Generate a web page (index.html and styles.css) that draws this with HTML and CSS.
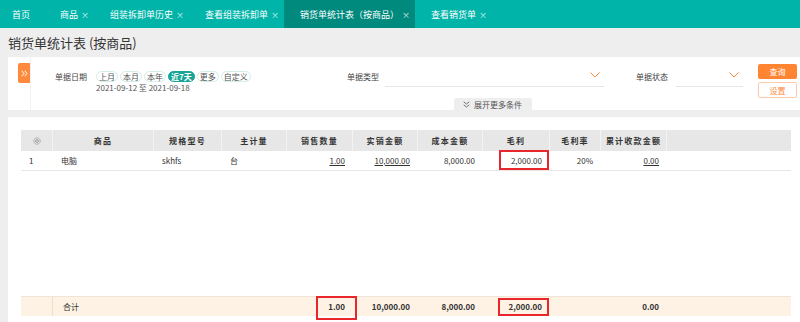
FILE: index.html
```html
<!DOCTYPE html>
<html lang="zh-CN">
  <head>
    <meta charset="UTF-8">
    <title>销货单统计表 (按商品)</title>
    <link rel="stylesheet" href="styles.css">
  </head>
  <body>
    <div class="tabs">
      <div class="tab home">首页</div>
      <div class="tab">商品<span class="close">×</span></div>
      <div class="tab">组装拆卸单历史<span class="close">×</span></div>
      <div class="tab">查看组装拆卸单<span class="close">×</span></div>
      <div class="tab active">销货单统计表（按商品）<span class="close">×</span></div>
      <div class="tab">查看销货单<span class="close">×</span></div>
    </div>

    <h1 class="page-title">销货单统计表 (按商品)</h1>

    <div class="filter">
      <div class="filter-side">
        <div class="toggle-btn">
          <svg width="7" height="7" viewBox="0 0 7 7"><path d="M0.8 0.8 L3 3.5 L0.8 6.2 M3.8 0.8 L6 3.5 L3.8 6.2" fill="none" stroke="#fff" stroke-width="1"/></svg>
        </div>
      </div>

      <div class="filter-main">
        <div class="fields">
          <div class="field date-field">
            <span class="label">单据日期</span>
            <div class="date-box">
              <div class="pills">
                <span class="pill">上月</span>
                <span class="pill">本月</span>
                <span class="pill">本年</span>
                <span class="pill on">近7天</span>
                <span class="pill">更多</span>
                <span class="pill">自定义</span>
              </div>
              <div class="range">2021-09-12 至 2021-09-18</div>
            </div>
          </div>
          <div class="field">
            <span class="label">单据类型</span>
            <div class="select type-select">
              <svg width="10" height="6" viewBox="0 0 10 6"><path d="M0.5 0.5 L5 5 L9.5 0.5" fill="none" stroke="#ff8a3d" stroke-width="1"/></svg>
            </div>
          </div>
          <div class="field status-field">
            <span class="label">单据状态</span>
            <div class="select status-select">
              <svg width="10" height="6" viewBox="0 0 10 6"><path d="M0.5 0.5 L5 5 L9.5 0.5" fill="none" stroke="#ff8a3d" stroke-width="1"/></svg>
            </div>
          </div>
        </div>
        <div class="more">
          <svg width="7" height="7" viewBox="0 0 7 7"><path d="M0.7 0.8 L3.5 3 L6.3 0.8 M0.7 3.8 L3.5 6 L6.3 3.8" fill="none" stroke="#666" stroke-width="0.9"/></svg>
          <span>展开更多条件</span>
        </div>
      </div>

      <div class="filter-btns">
        <div class="btn primary">查询</div>
        <div class="btn ghost">设置</div>
      </div>
    </div>

    <div class="grid-panel">
      <div class="row head">
        <div class="cell center">
          <svg width="8" height="8" viewBox="0 0 8 8"><circle cx="4" cy="4" r="3.2" fill="none" stroke="#888" stroke-width="0.9" stroke-dasharray="1.2 0.8"/><circle cx="4" cy="4" r="1.4" fill="none" stroke="#888" stroke-width="0.8"/></svg>
        </div>
        <div class="cell">商品</div>
        <div class="cell">规格型号</div>
        <div class="cell">主计量</div>
        <div class="cell">销售数量</div>
        <div class="cell">实销金额</div>
        <div class="cell">成本金额</div>
        <div class="cell">毛利</div>
        <div class="cell">毛利率</div>
        <div class="cell">累计收款金额</div>
        <div class="cell last"></div>
      </div>
      <div class="row data">
        <div class="cell">1</div>
        <div class="cell">电脑</div>
        <div class="cell">skhfs</div>
        <div class="cell">台</div>
        <div class="cell num"><a>1.00</a></div>
        <div class="cell num"><a>10,000.00</a></div>
        <div class="cell num">8,000.00</div>
        <div class="cell num">2,000.00<span class="mark mark-profit"></span></div>
        <div class="cell num">20%</div>
        <div class="cell num"><a>0.00</a></div>
        <div class="cell"></div>
      </div>
      <div class="grid-body"></div>
      <div class="row total">
        <div class="cell first"></div>
        <div class="cell">合计</div>
        <div class="cell"></div>
        <div class="cell"></div>
        <div class="cell num">1.00<span class="mark mark-qty"></span></div>
        <div class="cell num">10,000.00</div>
        <div class="cell num">8,000.00</div>
        <div class="cell num">2,000.00<span class="mark mark-total"></span></div>
        <div class="cell num"></div>
        <div class="cell num">0.00</div>
        <div class="cell"></div>
      </div>
    </div>
  </body>
</html>
```

FILE: styles.css
```css
* {
  box-sizing: border-box;
}

body {
  margin: 0;
  height: 322px;
  overflow: hidden;
  background-color: #eeeeee;
  color: #333;
  font-family: "Noto Sans CJK SC", "Noto Sans", sans-serif;
}

/* top tabs */
.tabs {
  display: flex;
  height: 28px;
  background-color: #00b4a9;
  color: #fff;
  font-size: 9px;
}

.tab {
  display: flex;
  align-items: center;
  padding: 0 5px 0 16px;
}

.tab.home {
  padding: 0 14px 0 12px;
}

.tab .close {
  margin-left: 3px;
  font-size: 8px;
  opacity: 0.85;
}

.tab.active {
  background-color: #008a7e;
  padding: 0 5px 0 16px;
}

.page-title {
  margin: 0;
  height: 29px;
  line-height: 29px;
  padding-left: 8px;
  font-size: 13px;
  font-weight: normal;
}

/* filter panel */
.filter {
  display: flex;
  height: 53px;
  margin-left: 8px;
  background-color: #fff;
}

.filter-side {
  width: 23px;
  display: flex;
  justify-content: flex-end;
  align-items: flex-start;
  padding-top: 6px;
  border-right: 1px solid #f1f1f1;
}

.toggle-btn {
  width: 12px;
  height: 20px;
  display: flex;
  justify-content: center;
  align-items: center;
  background-color: #ff8a3d;
  border-radius: 2px 0 0 2px;
}

.filter-main {
  flex: 1;
  display: flex;
  flex-direction: column;
  padding: 10px 0 0 24px;
}

.fields {
  display: flex;
  height: 25px;
}

.field {
  display: flex;
  align-items: flex-start;
}

.label {
  line-height: 20px;
  font-size: 8px;
  color: #444;
  margin-right: 6px;
}

.date-field {
  width: 292px;
}

.date-field .label {
  margin-right: 9px;
}

.date-box {
  padding-top: 4px;
}

.pills {
  display: flex;
  gap: 2px;
  height: 11px;
}

.pill {
  display: flex;
  align-items: center;
  padding: 0 2px;
  font-size: 8px;
  color: #555;
  border: 1px solid #d3eeea;
  border-radius: 6px;
}

.pill.on {
  background-color: #16a596;
  border-color: #16a596;
  color: #fff;
  font-weight: bold;
}

.range {
  line-height: 11px;
  font-size: 8px;
  color: #555;
}

.select {
  height: 20px;
  display: flex;
  justify-content: flex-end;
  align-items: center;
  padding: 0 4px 3px 0;
  border-bottom: 1px solid #e6e6e6;
}

.type-select {
  width: 219px;
}

.status-field {
  margin-left: 32px;
}

.status-field .label {
  margin-right: 8px;
}

.status-select {
  width: 67px;
  padding-right: 4px;
}

.more {
  align-self: flex-start;
  display: flex;
  align-items: center;
  gap: 4px;
  width: 78px;
  height: 12px;
  margin: 6px 0 0 399px;
  padding-left: 9px;
  background-color: #eeeeee;
  border-radius: 3px 3px 0 0;
  font-size: 8px;
  color: #555;
}

.filter-btns {
  display: flex;
  flex-direction: column;
  gap: 3px;
  width: 42px;
  padding: 7px 3px 0 0;
}

.btn {
  display: flex;
  justify-content: center;
  align-items: center;
  font-size: 8px;
  border-radius: 2px;
}

.btn.primary {
  height: 15px;
  background-color: #ff8533;
  color: #fff;
}

.btn.ghost {
  height: 16px;
  border: 1px solid #ffcaa6;
  color: #ff8a3d;
}

/* grid */
.grid-panel {
  display: flex;
  flex-direction: column;
  height: 205px;
  margin: 7px 0 0 8px;
  padding: 13px 9px 6px 13px;
  background-color: #fff;
}

.row {
  display: grid;
  grid-template-columns: 32px 101px 68px 65px 66px 65px 65px 67px 51px 66px 1fr;
  font-size: 8px;
}

.cell {
  position: relative;
  display: flex;
  align-items: center;
  padding: 0 8px;
  white-space: nowrap;
}

.cell.num {
  justify-content: flex-end;
}

.cell a {
  color: #333;
  text-decoration: underline;
}

.row.head {
  height: 21px;
  background-color: #e7e7e7;
  font-weight: bold;
  letter-spacing: 1.2px;
}

.row.head .cell {
  justify-content: center;
  padding: 0;
  border-right: 1px solid #f3f3f3;
}

.row.head .cell.last {
  border-right: none;
}

.row.data {
  height: 20px;
  border-bottom: 1px solid #e6e6e6;
}

.grid-body {
  flex: 1;
}

.row.total {
  height: 20px;
  background-color: #fdf2e4;
  border-top: 1px solid #efe4d6;
  font-weight: bold;
}

.row.total .cell:nth-child(2) {
  font-weight: normal;
  padding-left: 10px;
}

.row.total .cell.first {
  border-right: 1px solid #eadfd1;
}

/* red highlight boxes */
.mark {
  position: absolute;
  border: 2px solid #e8262b;
}

.mark-profit {
  left: 16px;
  right: 1px;
  top: -1px;
  bottom: 0;
}

.mark-qty {
  left: 29px;
  right: -4px;
  top: -1px;
  bottom: -4px;
}

.mark-total {
  left: 15px;
  right: 1px;
  top: 1px;
  bottom: 0;
}
```
